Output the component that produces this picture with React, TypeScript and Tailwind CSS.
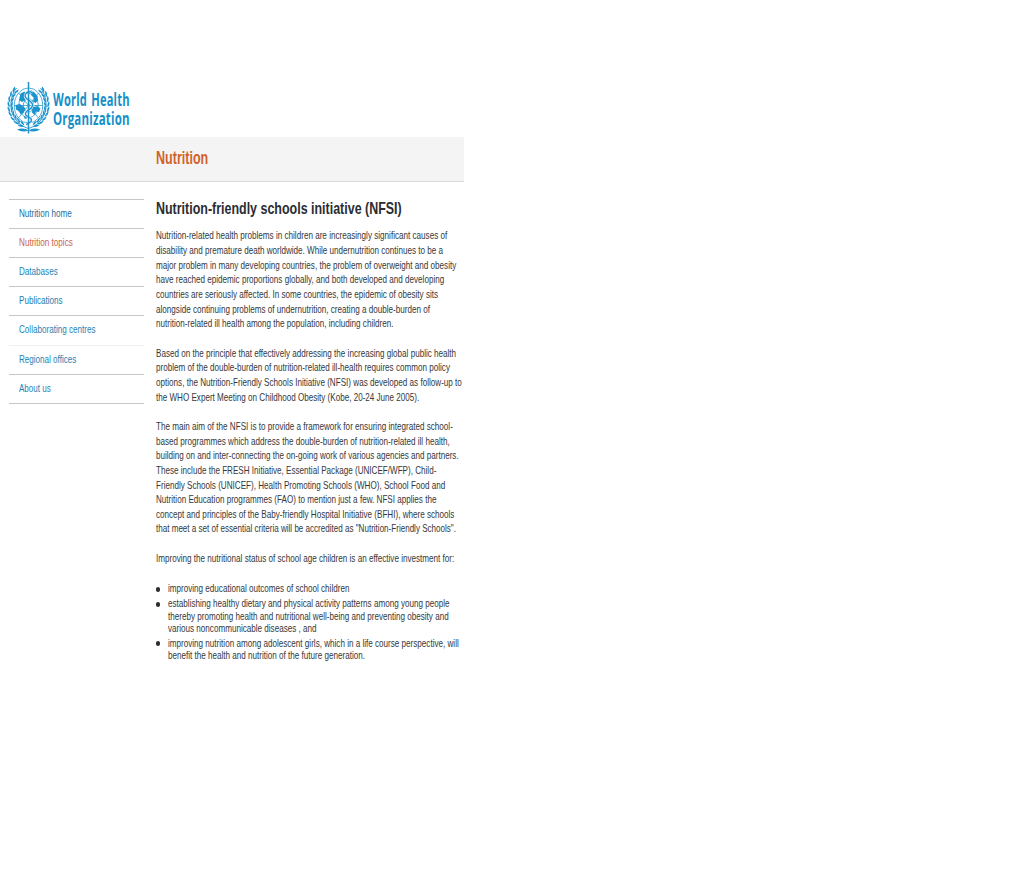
import { useLayoutEffect, useRef, useState } from 'react';

/* One line of condensed text, squeezed horizontally to the given width. */
function Fit({ text, width }: { text: string; width: number }) {
  const ref = useRef<HTMLSpanElement>(null);
  const [scale, setScale] = useState(0.8);
  useLayoutEffect(() => {
    if (ref.current) setScale(width / ref.current.offsetWidth);
  }, [text, width]);
  return (
    <span className="block w-0 whitespace-nowrap">
      <span ref={ref} className="inline-block origin-left align-top" style={{ transform: `scaleX(${scale})` }}>
        {text}
      </span>
    </span>
  );
}

type TextLine = [string, number];

const nav: { label: string; width: number; color: string; border: string }[] = [
  { label: 'Nutrition home', width: 52.5, color: 'text-[#1b6f9f]', border: 'border-[#c6c6c6]' },
  { label: 'Nutrition topics', width: 53.5, color: 'text-[#cd6540]', border: 'border-[#c6c6c6]' },
  { label: 'Databases', width: 39, color: 'text-[#1b84b5]', border: 'border-[#c6c6c6]' },
  { label: 'Publications', width: 43.5, color: 'text-[#1b7dae]', border: 'border-[#c6c6c6]' },
  { label: 'Collaborating centres', width: 76.5, color: 'text-[#1b84b5]', border: 'border-[#f1f1f1]' },
  { label: 'Regional offices', width: 57.5, color: 'text-[#1b84b5]', border: 'border-[#c6c6c6]' },
  { label: 'About us', width: 32, color: 'text-[#1b84b5]', border: 'border-[#c6c6c6]' },
];

const paragraphs: TextLine[][] = [
  [
    ['Nutrition-related health problems in children are increasingly significant causes of', 291.5],
    ['disability and premature death worldwide. While undernutrition continues to be a', 287],
    ['major problem in many developing countries, the problem of overweight and obesity', 300],
    ['have reached epidemic proportions globally, and both developed and developing', 288.5],
    ['countries are seriously affected. In some countries, the epidemic of obesity sits', 282],
    ['alongside continuing problems of undernutrition, creating a double-burden of', 274],
    ['nutrition-related ill health among the population, including children.', 237.5],
  ],
  [
    ['Based on the principle that effectively addressing the increasing global public health', 300],
    ['problem of the double-burden of nutrition-related ill-health requires common policy', 294],
    ['options, the Nutrition-Friendly Schools Initiative (NFSI) was developed as follow-up to', 305.5],
    ['the WHO Expert Meeting on Childhood Obesity (Kobe, 20-24 June 2005).', 263.5],
  ],
  [
    ['The main aim of the NFSI is to provide a framework for ensuring integrated school-', 296.5],
    ['based programmes which address the double-burden of nutrition-related ill health,', 293.5],
    ['building on and inter-connecting the on-going work of various agencies and partners.', 303],
    ['These include the FRESH Initiative, Essential Package (UNICEF/WFP), Child-', 280.5],
    ['Friendly Schools (UNICEF), Health Promoting Schools (WHO), School Food and', 289],
    ['Nutrition Education programmes (FAO) to mention just a few. NFSI applies the', 280.5],
    ['concept and principles of the Baby-friendly Hospital Initiative (BFHI), where schools', 298.5],
    ['that meet a set of essential criteria will be accredited as "Nutrition-Friendly Schools".', 300],
  ],
  [['Improving the nutritional status of school age children is an effective investment for:', 298.5]],
];

const bullets: TextLine[][] = [
  [['improving educational outcomes of school children', 181.5]],
  [
    ['establishing healthy dietary and physical activity patterns among young people', 281.5],
    ['thereby promoting health and nutritional well-being and preventing obesity and', 281],
    ['various noncommunicable diseases , and', 148.5],
  ],
  [
    ['improving nutrition among adolescent girls, which in a life course perspective, will', 291],
    ['benefit the health and nutrition of the future generation.', 197],
  ],
];

const leaves: [number, number, number][] = [
  [7, 8, 28], [4.2, 12.5, 14], [2.6, 17.5, 4], [1.9, 22.5, -4], [2.2, 27.5, -14], [3.6, 32.3, -26], [6.2, 36.8, -40], [9.8, 40.6, -54], [14, 43.6, -66],
];

function HalfWreath() {
  return (
    <g>
      <path d="M9.5 6C3.5 13 2 26 6.5 34C10 40.5 15 44.5 21.5 46.5" fill="none" stroke="currentColor" strokeWidth=".9" />
      {leaves.map(([x, y, a]) => (
        <g key={y} transform={`translate(${x} ${y}) rotate(${a})`}>
          <path d="M.4 3C-1.8 1-1.6-1.8-.6-3.6C.6-1.8 1 1 .4 3Z" fill="currentColor" />
          <path d="M1.5 3C4 1.5 4.4-.8 4-2.8C2.4-1.6 1.5.5 1.5 3Z" fill="currentColor" />
        </g>
      ))}
      <path d="M10 47.6C14.5 45.6 18.5 46.4 21.5 48.6C18 50 13.5 49.8 10 47.6Z" fill="currentColor" />
    </g>
  );
}

function Emblem() {
  return (
    <svg className="h-[52px] w-[43px] shrink-0 text-[#1c93cd]" viewBox="0 0 43 52" aria-hidden="true">
      <HalfWreath />
      <g transform="translate(43 0) scale(-1 1)">
        <HalfWreath />
      </g>
      <g fill="none" stroke="currentColor" strokeWidth=".75">
        <ellipse cx="21.5" cy="23.5" rx="14.2" ry="17.6" />
        <ellipse cx="21.5" cy="23.5" rx="9.8" ry="12.2" />
        <ellipse cx="21.5" cy="23.5" rx="5.2" ry="6.6" />
        <path d="M7.3 23.5H35.7M11.5 11L31.5 36M31.5 11L11.5 36" />
      </g>
      <g fill="currentColor">
        <path d="M13.5 11.5L17.5 9.5L19.5 12L17 15L18.5 18L15 20L12 18L12.8 14.5Z" />
        <path d="M23.5 8L27 10L30.5 14L31 18.5L28.5 21L26 19.5L27 16L24 13Z" />
        <path d="M8.5 23L13 22L16 24.5L18.5 26L16.5 31L14 32.5L11.5 29L9 27.5Z" />
        <path d="M25.5 25.5L30 24L33.5 26.5L32 30L29 29.5L27.5 33L25 30.5Z" />
        <path d="M17 34L19.8 33.5L19.5 37L17.5 36.5Z" />
      </g>
      <path
        d="M25.5 10.5C19 8 16 14 20 17C23 19.5 27 21 25 25C23 28 17.5 29 18.5 32.5C19.5 35.5 25 35 24.5 38.5C24 41 20 40.5 19.5 43"
        fill="none"
        stroke="white"
        strokeWidth="2.4"
      />
      <path
        d="M25.5 10.5C19 8 16 14 20 17C23 19.5 27 21 25 25C23 28 17.5 29 18.5 32.5C19.5 35.5 25 35 24.5 38.5C24 41 20 40.5 19.5 43"
        fill="none"
        stroke="currentColor"
        strokeWidth="1.4"
      />
      <path d="M21.5 0V51.5" stroke="currentColor" strokeWidth="1.5" />
    </svg>
  );
}

export default function App() {
  return (
    <div className="h-[894px] w-full overflow-hidden bg-white font-['Liberation_Sans',Arial,sans-serif] text-[10.8px] text-[#34383c]">
      <div className="w-[464px]">
        <header className="flex h-[137px] items-start pt-[82px] pl-[7px]">
          <Emblem />
          <div className="ml-[3px] pt-[8px] font-['Open_Sans',sans-serif] text-[18.6px] leading-[18.5px] font-bold tracking-[0.3px] text-[#1590c9]">
            <div className="[word-spacing:2px]">
              <Fit text="World Health" width={76.5} />
            </div>
            <Fit text="Organization" width={76.5} />
          </div>
        </header>

        <div className="h-[45px] border-b border-[#d9d9d9] bg-[#f4f4f4] pt-[11px] pl-[156px] text-[17.6px] leading-5 font-bold text-[#d2622d]">
          <Fit text="Nutrition" width={52} />
        </div>

        <div className="flex">
          <nav className="ml-[9px] w-[135px] shrink-0 pt-[17px]">
            <ul className="border-t border-[#c6c6c6]">
              {nav.map((item) => (
                <li key={item.label} className={`h-[29.12px] border-b pt-[6px] pl-[9.5px] leading-[15px] ${item.color} ${item.border}`}>
                  <a>
                    <Fit text={item.label} width={item.width} />
                  </a>
                </li>
              ))}
            </ul>
          </nav>

          <main className="ml-3 pt-[16px]">
            <h1 className="text-[16.2px] leading-5 font-bold text-[#2b2d33]">
              <Fit text="Nutrition-friendly schools initiative (NFSI)" width={245.5} />
            </h1>
            <div className="mt-[10.4px] flex flex-col gap-[14.65px] leading-[14.65px]">
              {paragraphs.map((lines, i) => (
                <p key={i}>
                  {lines.map(([text, width]) => (
                    <Fit key={text} text={text} width={width} />
                  ))}
                </p>
              ))}
            </div>
            <ul className="mt-[17px] flex flex-col gap-[2px] leading-[12.6px]">
              {bullets.map((lines, i) => (
                <li key={i} className="flex">
                  <span className="mt-[4.5px] mr-[7.5px] h-[5px] w-1 shrink-0 rounded-full bg-[#2b2d30]" />
                  <div>
                    {lines.map(([text, width]) => (
                      <Fit key={text} text={text} width={width} />
                    ))}
                  </div>
                </li>
              ))}
            </ul>
          </main>
        </div>
      </div>
    </div>
  );
}
